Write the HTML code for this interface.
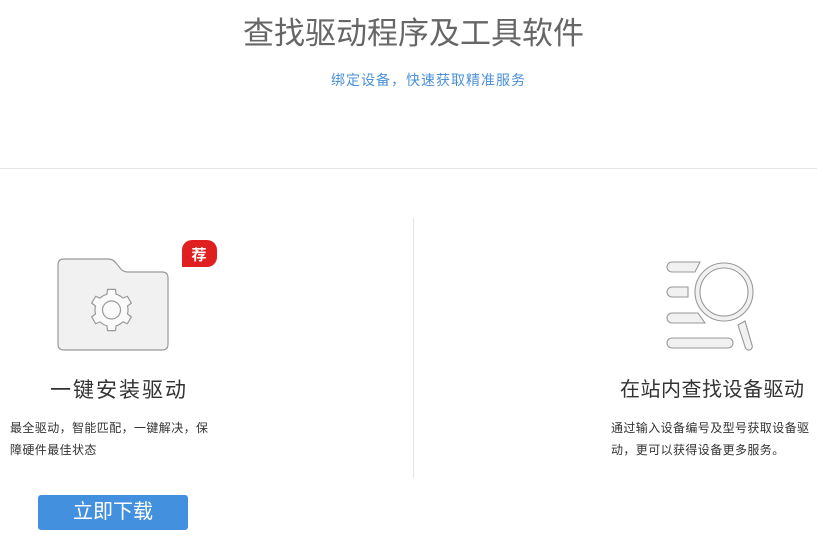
<!DOCTYPE html>
<html><head><meta charset="utf-8"><style>
body{margin:0;width:817px;height:558px;background:#fff;position:relative;overflow:hidden;font-family:"Liberation Sans","Noto Sans CJK SC",sans-serif}
.a{position:absolute;white-space:nowrap;line-height:1}
</style></head><body>
<div class="a" style="left:243px;top:18px;font-size:31px;letter-spacing:0px;color:#666">查找驱动程序及工具软件</div>
<div class="a" style="left:331px;top:73px;font-size:14px;letter-spacing:1px;color:#4a90d9">绑定设备，快速获取精准服务</div>
<div class="a" style="left:0;top:168px;width:817px;height:1px;background:#e5e5e5"></div>
<div class="a" style="left:413px;top:218px;width:1px;height:260px;background:#e5e5e5"></div>

<svg class="a" style="left:0;top:0" width="817" height="558">
<path d="M64 259h44q5 0 8 4l4 5q3 4 8 4h34q6 0 6 6v66q0 6-6 6H64q-6 0-6-6V265q0-6 6-6z" fill="#f1f1f1" stroke="#999" stroke-width="1.2"/>
<g transform="translate(111.5,310)" fill="none" stroke="#999" stroke-width="1.2" stroke-linejoin="round">
<path d="M-4.55 -15.86 L-4 -20.6 L4 -20.6 L4.55 -15.86 A16.5 16.5 0 0 1 11.46 -11.87 L15.84 -13.76 L19.84 -6.84 L16 -3.99 A16.5 16.5 0 0 1 16.01 3.99 L19.84 6.84 L15.84 13.76 L11.46 11.86 A16.5 16.5 0 0 1 4.55 15.86 L4 20.6 L-4 20.6 L-4.55 15.86 A16.5 16.5 0 0 1 -11.46 11.87 L-15.84 13.76 L-19.84 6.84 L-16 3.99 A16.5 16.5 0 0 1 -16.01 -3.99 L-19.84 -6.84 L-15.84 -13.76 L-11.46 -11.86 A16.5 16.5 0 0 1 -4.55 -15.86 Z" fill="#fafafa"/>
<circle r="9"/>
</g>
<path d="M192 240h15a10 10 0 0 1 10 10v7a10 10 0 0 1-10 10h-25v-17a10 10 0 0 1 10-10z" fill="#e02020"/>
<text x="199" y="260" font-size="15" font-weight="bold" fill="#fff" text-anchor="middle" font-family="Noto Sans CJK SC,sans-serif">荐</text>
<g fill="#f1f1f1" stroke="#999" stroke-width="1.1">
<path d="M672 262h28l-5 10h-23a5 5 0 0 1 0-10z"/>
<path d="M672 287h16v10h-16a5 5 0 0 1 0-10z"/>
<path d="M672 313h26l7 10h-33a5 5 0 0 1 0-10z"/>
<rect x="667" y="338" width="66" height="10" rx="5"/>
<path d="M738 325l7-4 7 24a3.5 3.5 0 0 1-6.5 3z"/>
<circle cx="724" cy="292" r="29"/>
<circle cx="724" cy="292" r="24" fill="#fff"/>
</g>
</svg>

<div class="a" style="left:50px;top:380px;font-size:21px;letter-spacing:2px;color:#333">一键安装驱动</div>
<div class="a" style="left:10px;top:417px;font-size:12px;letter-spacing:0.4px;color:#333;line-height:22px">最全驱动，智能匹配，一键解决，保<br>障硬件最佳状态</div>
<div class="a" style="left:38px;top:495px;width:150px;height:35px;background:#4390de;border-radius:3px;color:#fff;font-size:20px;text-align:center;line-height:35px">立即下载</div>

<div class="a" style="left:620px;top:380px;font-size:20px;letter-spacing:0.5px;color:#333">在站内查找设备驱动</div>
<div class="a" style="left:611px;top:417px;font-size:12px;letter-spacing:0.4px;color:#333;line-height:22px">通过输入设备编号及型号获取设备驱<br>动，更可以获得设备更多服务。</div>
</body></html>
